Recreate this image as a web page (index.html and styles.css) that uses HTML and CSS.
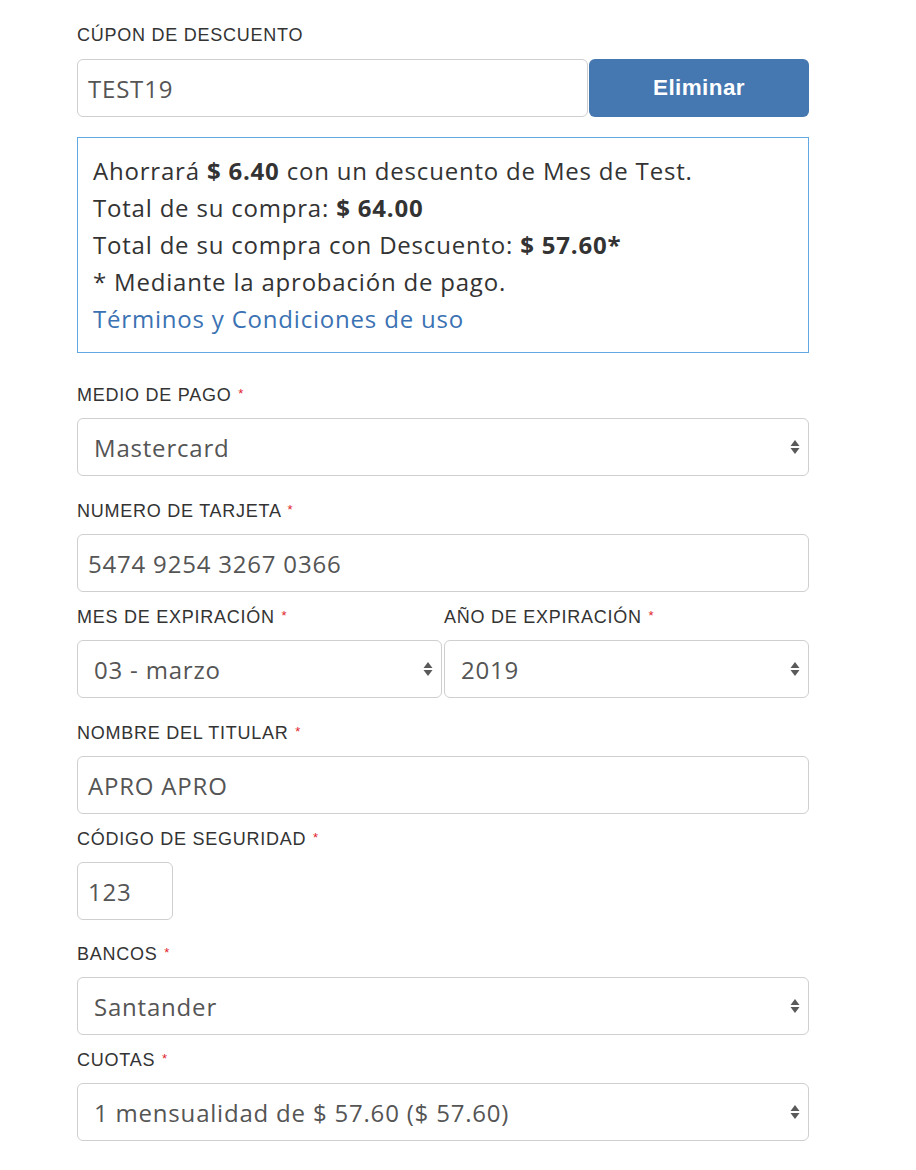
FILE: index.html
```html
<!DOCTYPE html>
<html lang="es">
<head>
<meta charset="utf-8">
<title>Pago</title>
<link rel="stylesheet" href="styles.css">
</head>
<body>
<div class="form">
  <div class="group g-coupon">
    <div class="label">CÚPON DE DESCUENTO</div>
    <div class="coupon-row">
      <div class="control input coupon-input">TEST19</div>
      <div class="btn">Eliminar</div>
    </div>
  </div>

  <div class="info">
    <p>Ahorrará <b>$ 6.40</b> con un descuento de Mes de Test.</p>
    <p>Total de su compra: <b>$ 64.00</b></p>
    <p>Total de su compra con Descuento: <b>$ 57.60*</b></p>
    <p>* Mediante la aprobación de pago.</p>
    <p><a class="link" href="#">Términos y Condiciones de uso</a></p>
  </div>

  <div class="group g-24">
    <div class="label">MEDIO DE PAGO <span class="req">*</span></div>
    <div class="control select"><span>Mastercard</span><svg class="arrows" width="12" height="20" viewBox="0 0 12 20"><path d="M6 3 L10.5 9 H1.5 Z M1.5 11 H10.5 L6 17 Z" fill="#5a5a5a"/></svg></div>
  </div>

  <div class="group g-14">
    <div class="label">NUMERO DE TARJETA <span class="req">*</span></div>
    <div class="control input">5474 9254 3267 0366</div>
  </div>

  <div class="group g-24 row2">
    <div class="col">
      <div class="label">MES DE EXPIRACIÓN <span class="req">*</span></div>
      <div class="control select"><span>03 - marzo</span><svg class="arrows" width="12" height="20" viewBox="0 0 12 20"><path d="M6 3 L10.5 9 H1.5 Z M1.5 11 H10.5 L6 17 Z" fill="#5a5a5a"/></svg></div>
    </div>
    <div class="col">
      <div class="label">AÑO DE EXPIRACIÓN <span class="req">*</span></div>
      <div class="control select"><span>2019</span><svg class="arrows" width="12" height="20" viewBox="0 0 12 20"><path d="M6 3 L10.5 9 H1.5 Z M1.5 11 H10.5 L6 17 Z" fill="#5a5a5a"/></svg></div>
    </div>
  </div>

  <div class="group g-14">
    <div class="label">NOMBRE DEL TITULAR <span class="req">*</span></div>
    <div class="control input">APRO APRO</div>
  </div>

  <div class="group g-23">
    <div class="label">CÓDIGO DE SEGURIDAD <span class="req">*</span></div>
    <div class="control input cvv">123</div>
  </div>

  <div class="group g-14">
    <div class="label">BANCOS <span class="req">*</span></div>
    <div class="control select"><span>Santander</span><svg class="arrows" width="12" height="20" viewBox="0 0 12 20"><path d="M6 3 L10.5 9 H1.5 Z M1.5 11 H10.5 L6 17 Z" fill="#5a5a5a"/></svg></div>
  </div>

  <div class="group">
    <div class="label">CUOTAS <span class="req">*</span></div>
    <div class="control select"><span>1 mensualidad de $ 57.60 ($ 57.60)</span><svg class="arrows" width="12" height="20" viewBox="0 0 12 20"><path d="M6 3 L10.5 9 H1.5 Z M1.5 11 H10.5 L6 17 Z" fill="#5a5a5a"/></svg></div>
  </div>
</div>
</body>
</html>
```

FILE: styles.css
```css
* { box-sizing: border-box; }
html, body { margin: 0; padding: 0; background: #fff; }
body { padding: 25px 0 0 77px; }
.form { width: 732px; }

.label {
  font-family: "Liberation Sans", Arial, sans-serif;
  font-size: 18px;
  line-height: 20px;
  height: 20px;
  color: #333;
  margin-bottom: 14px;
  letter-spacing: 0.75px;
  white-space: nowrap;
}
.req { color: #e0242b; font-size: 13px; vertical-align: 3px; margin-left: 1px; letter-spacing: 0; }

.group { margin-bottom: 20px; }
.g-24 { margin-bottom: 24px; }
.g-23 { margin-bottom: 23px; }
.g-14 { margin-bottom: 14px; }

.control {
  height: 58px;
  border: 1px solid #cfcfcf;
  border-radius: 6px;
  font-family: "Open Sans", sans-serif;
  font-size: 24px;
  letter-spacing: 0.8px;
  color: #555;
  display: flex;
  align-items: center;
  background: #fff;
}
.input { padding-left: 10px; }
.select { padding: 0 7px 0 16px; justify-content: space-between; }
.arrows { flex: none; }
.cvv { width: 96px; }

.coupon-row { display: flex; gap: 1px; }
.coupon-input { flex: 1; }
.btn {
  width: 220px;
  height: 58px;
  background: #4577b1;
  border-radius: 6px;
  color: #fff;
  font-family: "Liberation Sans", Arial, sans-serif;
  font-weight: bold;
  font-size: 22.5px;
  display: flex;
  align-items: center;
  justify-content: center;
  letter-spacing: 0.4px;
}

.info {
  border: 1px solid #62a8e4;
  padding: 14px 15px 16px;
  height: 216px;
  margin-bottom: 31px;
  font-family: "Open Sans", sans-serif;
  font-size: 24px;
  letter-spacing: 0.8px;
  color: #333;
}
.info p { margin: 0; line-height: 37px; white-space: nowrap; }
.info b { font-weight: bold; }
.link { color: #3b72b3; text-decoration: none; }

.row2 { display: flex; gap: 2px; }
.row2 .col:first-child { flex: 0 0 365px; }
.row2 .col:last-child { flex: 1; }
```
